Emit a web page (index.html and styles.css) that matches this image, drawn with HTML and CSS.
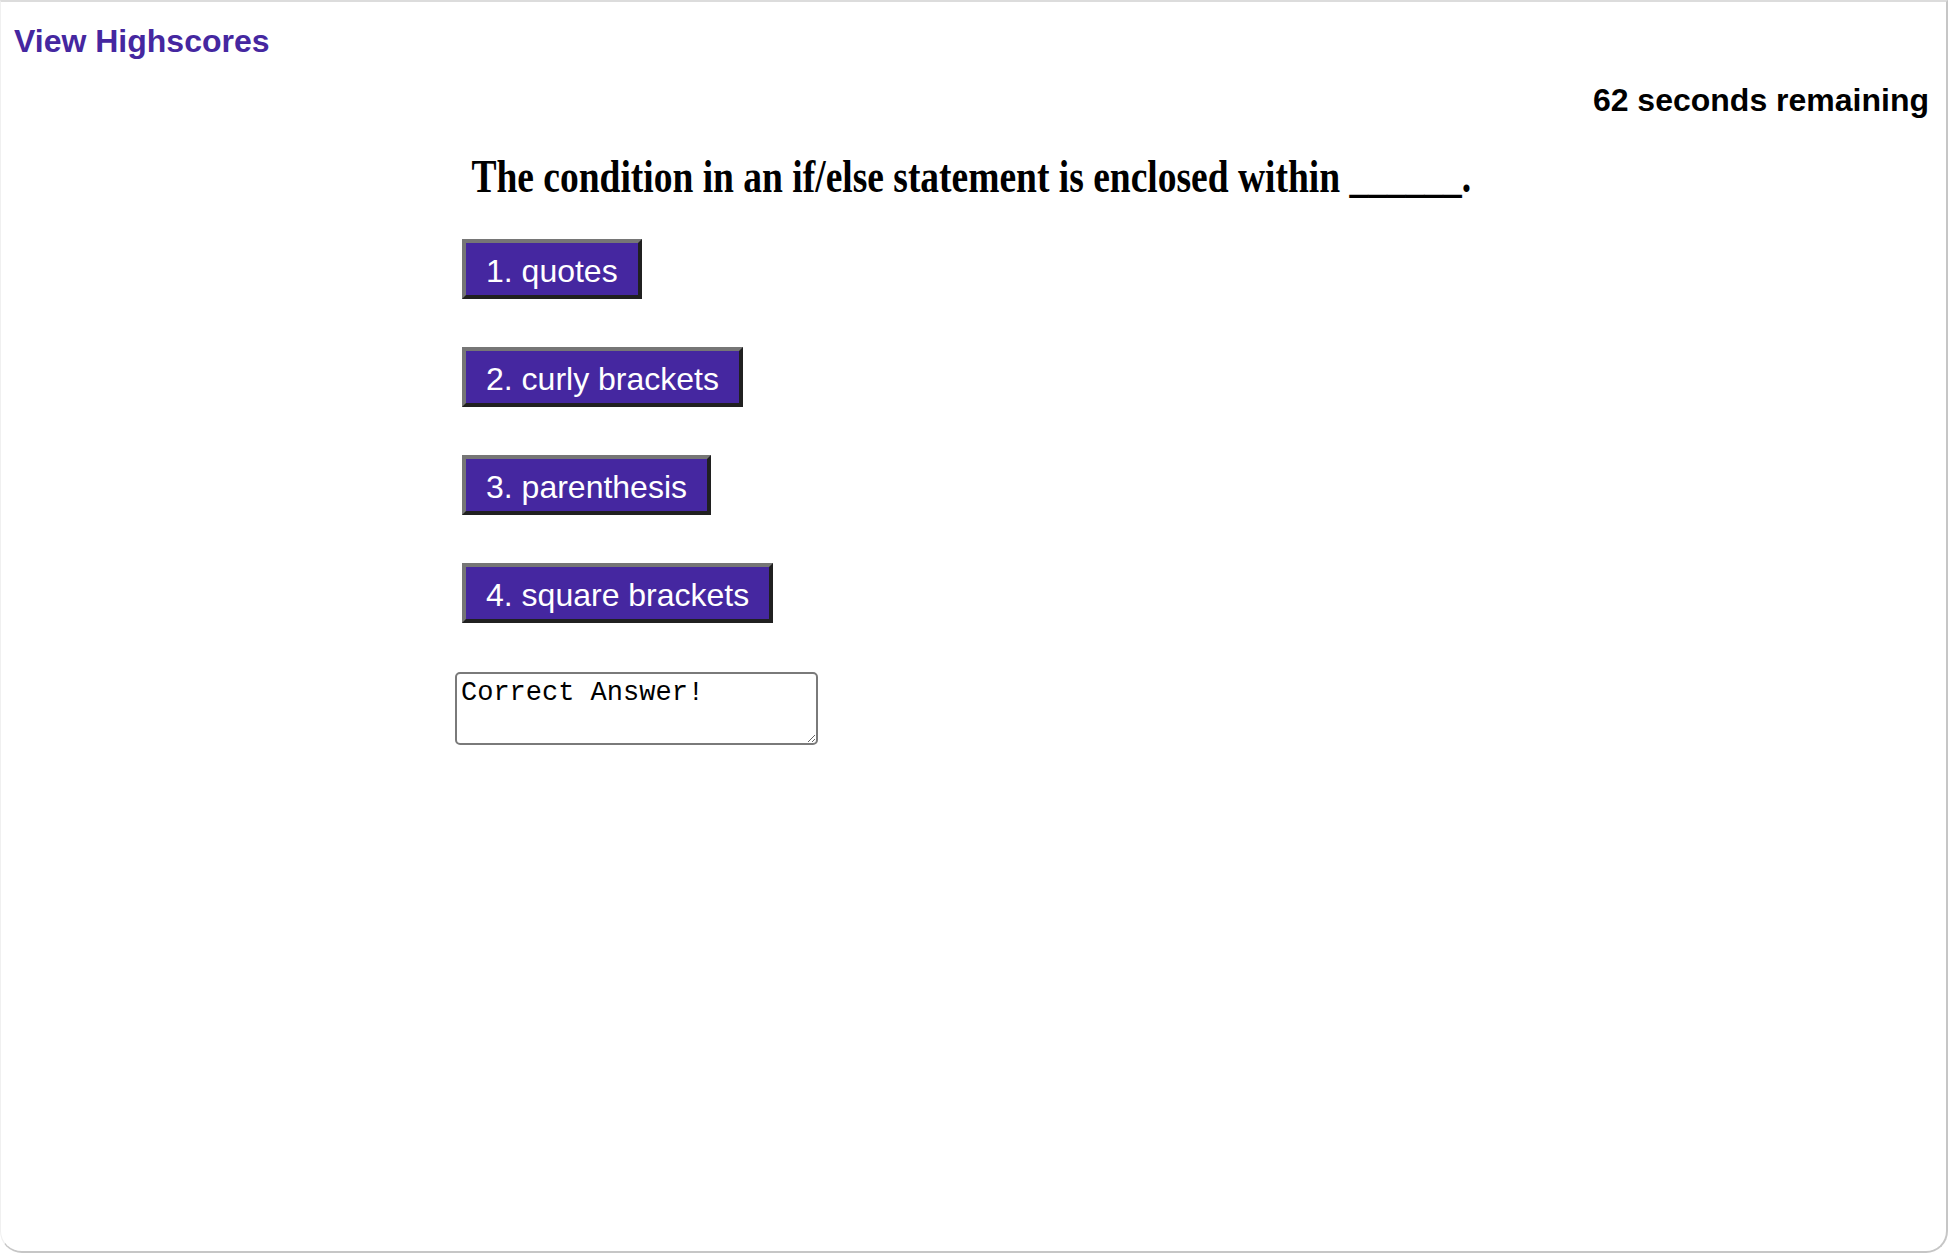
FILE: index.html
```html
<!DOCTYPE html>
<html lang="en">
<head>
<meta charset="utf-8">
<title>Code Quiz</title>
<link rel="stylesheet" href="styles.css">
</head>
<body>
<div class="window">
  <header class="top">
    <a class="highscores" href="#">View Highscores</a>
  </header>
  <div class="timer">62 seconds remaining</div>
  <main class="quiz">
    <h2 class="question"><span class="question-text">The condition in an if/else statement is enclosed within ______.</span></h2>
    <div class="choices">
      <button class="choice">1. quotes</button>
      <button class="choice">2. curly brackets</button>
      <button class="choice">3. parenthesis</button>
      <button class="choice">4. square brackets</button>
    </div>
    <textarea class="feedback">Correct Answer!</textarea>
  </main>
</div>
</body>
</html>
```
FILE: styles.css
```css
html, body {
  margin: 0;
  padding: 0;
  background: #ffffff;
}

.window {
  box-sizing: border-box;
  width: 1948px;
  height: 1253px;
  border-top: 2px solid #dcdcdc;
  border-right: 2px solid #c6c6c6;
  border-bottom: 2px solid #c6c6c6;
  border-left: 1px solid #f0f0f0;
  border-radius: 0 0 22px 22px;
  padding: 0 17px 0 13px;
  overflow: hidden;
}

.top {
  padding-top: 21px;
  height: 37px;
}

.highscores {
  font-family: "Liberation Sans", Arial, sans-serif;
  font-weight: bold;
  font-size: 32px;
  line-height: 37px;
  color: #4527a0;
  text-decoration: none;
}

.timer {
  margin-top: 22px;
  text-align: right;
  font-family: "Liberation Sans", Arial, sans-serif;
  font-weight: bold;
  font-size: 32px;
  line-height: 37px;
  color: #000;
}

.quiz {
  display: flex;
  flex-direction: column;
}

.question {
  margin: 30px 0 0 0;
  text-align: center;
  font-family: "Liberation Serif", "Times New Roman", serif;
  font-weight: bold;
  font-size: 46px;
  line-height: 55px;
  color: #000;
}

.question-text {
  display: inline-block;
  transform: scaleX(0.815);
  transform-origin: center;
  white-space: nowrap;
}

.choices {
  display: flex;
  flex-direction: column;
  align-items: flex-start;
  gap: 48px;
  margin-top: 35px;
  padding-left: 448px;
}

.choice {
  box-sizing: border-box;
  height: 60px;
  margin: 0;
  padding: 5px 20px 0;
  background: #4527a0;
  color: #ffffff;
  font-family: "Liberation Sans", Arial, sans-serif;
  font-size: 32px;
  line-height: 47px;
  border-style: solid;
  border-width: 4px;
  border-color: #767676 #202020 #202020 #767676;
  border-radius: 0;
  cursor: pointer;
}

.feedback {
  box-sizing: border-box;
  align-self: flex-start;
  margin: 49px 0 0 441px;
  width: 363px;
  height: 73px;
  padding: 4px 4px;
  border: 2px solid #7a7a7a;
  border-radius: 5px;
  font-family: "Liberation Mono", "Courier New", monospace;
  font-size: 27px;
  line-height: 30px;
  color: #000;
  background: #fff;
}
```
